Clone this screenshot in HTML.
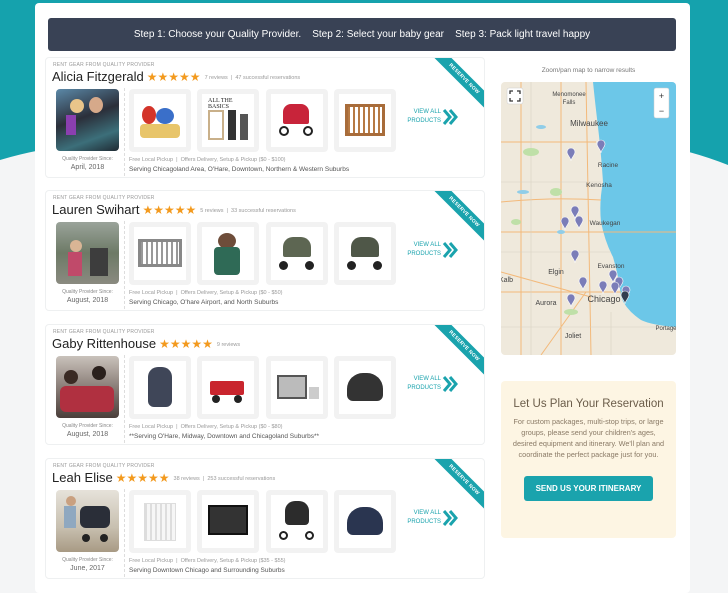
<!DOCTYPE html>
<html><head><meta charset="utf-8"><style>
*{box-sizing:border-box;margin:0;padding:0}
body{width:728px;height:586px;overflow:hidden;background:#f4f5f6;font-family:"Liberation Sans",sans-serif;position:relative}
.teal{position:absolute;left:0;top:0;width:728px;height:170px}
.wrap{position:absolute;left:35px;top:3px;width:655px;height:590px;background:#fff;border-radius:4px}
.hdr{position:absolute;left:13px;top:15px;width:628px;height:33px;background:#394255;border-radius:3px;color:#fff;font-size:10px;line-height:33px;text-align:center}
.card{position:absolute;left:10px;width:440px;height:121px;border:1px solid #eef0f1;border-radius:4px;overflow:hidden;background:#fff}
.lbl{position:absolute;left:7px;top:4px;font-size:5px;color:#999;letter-spacing:.2px}
.nm{position:absolute;left:6px;top:11px;font-size:13px;color:#222;white-space:nowrap}
.nm .st{color:#f39a1e;font-size:12px;letter-spacing:0px;margin-left:3px}
.nm .rv{font-size:5.5px;color:#999;margin-left:4px;vertical-align:2px}
.ph{position:absolute;left:10px;top:31px;width:63px;height:62px;border-radius:4px;overflow:hidden}
.qs{position:absolute;left:0;width:83px;top:98px;text-align:center;font-size:5px;color:#888}
.dt{position:absolute;left:0;width:83px;top:106px;text-align:center;font-size:7px;color:#666}
.sep{position:absolute;left:78px;top:30px;height:88px;border-left:1px dashed #ddd}
.tile{position:absolute;top:31px;width:62px;height:63px;background:#f2f2f2;border-radius:4px}
.tile .in{position:absolute;left:5px;top:5px;width:52px;height:53px;background:#fff;overflow:hidden}
.fl{position:absolute;left:83px;top:99px;font-size:5.5px;color:#999;white-space:nowrap}
.sv{position:absolute;left:83px;top:108px;font-size:6.5px;color:#555;white-space:nowrap}
.va{position:absolute;left:361px;top:50px;font-size:6px;color:#1aa3ad;line-height:9px;text-align:right;width:34px}
.chev{position:absolute;left:396px;top:50px}
.rib{position:absolute;left:368px;top:15px;width:100px;height:12px;background:#1aa3ad;transform:rotate(45deg);color:#fff;font-size:5px;font-weight:bold;text-align:center;line-height:12px;letter-spacing:.3px}
.side{position:absolute;left:466px;width:175px}
.plan{position:absolute;left:466px;top:378px;width:175px;height:157px;background:#fdf5e3;border-radius:4px;text-align:center;color:#7a6a55}
.plan h3{font-weight:normal;font-size:11.5px;margin-top:17px;color:#6b5d4a}
.plan p{font-size:7.3px;line-height:11px;margin:6px 8px 0;color:#8a7a66}
.btn{display:inline-block;margin-top:16px;background:#1aa3ad;color:#fff;font-size:8px;font-weight:bold;padding:8px 12px;border-radius:3px}
</style></head><body>
<svg class="teal" viewBox="0 0 728 170"><path d="M0 0H728V165Q690 150 655 145H80Q40 148 0 160Z" fill="#15a2ad"/></svg>
<div class="wrap">
<div class="hdr">Step 1: Choose your Quality Provider. &nbsp;&nbsp;&nbsp;Step 2: Select your baby gear &nbsp;&nbsp;&nbsp;Step 3: Pack light travel happy</div>

<!-- card 1 -->
<div class="card" style="top:54px">
<div class="lbl">RENT GEAR FROM QUALITY PROVIDER</div>
<div class="nm">Alicia Fitzgerald<span class="st">★★★★★</span><span class="rv">7 reviews &nbsp;| &nbsp;47 successful reservations</span></div>
<div class="ph" style="background:linear-gradient(160deg,#5b89a8,#2b2f3a 45%,#3c6f7a 75%,#1f2a33)"><div style="position:absolute;left:14px;top:10px;width:14px;height:14px;border-radius:50%;background:#e9c58a"></div><div style="position:absolute;left:33px;top:8px;width:14px;height:16px;border-radius:50%;background:#d6a98a"></div><div style="position:absolute;left:10px;top:26px;width:10px;height:20px;background:#8a3fb0"></div></div>
<div class="qs">Quality Provider Since:</div><div class="dt">April, 2018</div>
<div class="sep"></div>
<div class="tile" style="left:83px"><div class="in"><div style="position:absolute;left:8px;top:12px;width:14px;height:18px;border-radius:50%;background:#d3342a"></div><div style="position:absolute;left:22px;top:14px;width:18px;height:16px;border-radius:50%;background:#3a6fc9"></div><div style="position:absolute;left:6px;top:30px;width:40px;height:14px;background:#e8c56a;border-radius:4px"></div></div></div>
<div class="tile" style="left:151px"><div class="in"><div style="position:absolute;left:6px;top:4px;font-family:'Liberation Serif',serif;font-size:6px;color:#222">ALL THE BASICS</div><div style="position:absolute;left:6px;top:16px;width:16px;height:30px;border:2px solid #c9b08a"></div><div style="position:absolute;left:26px;top:16px;width:8px;height:30px;background:#333"></div><div style="position:absolute;left:38px;top:20px;width:8px;height:26px;background:#555"></div></div></div>
<div class="tile" style="left:220px"><div class="in"><div style="position:absolute;left:12px;top:10px;width:26px;height:20px;background:#c8243a;border-radius:8px 8px 2px 2px"></div><div style="position:absolute;left:8px;top:32px;width:10px;height:10px;border:2px solid #222;border-radius:50%"></div><div style="position:absolute;left:32px;top:32px;width:10px;height:10px;border:2px solid #222;border-radius:50%"></div></div></div>
<div class="tile" style="left:288px"><div class="in"><div style="position:absolute;left:6px;top:10px;width:40px;height:32px;border:3px solid #a86c3a;background:repeating-linear-gradient(90deg,#b77a44 0 2px,transparent 2px 5px)"></div></div></div>
<div class="va">VIEW ALL<br>PRODUCTS</div>
<svg class="chev" width="16" height="18" viewBox="0 0 16 18"><path d="M2 2l6 7-6 7M8 2l6 7-6 7" stroke="#1aa3ad" stroke-width="3" fill="none"/></svg>
<div class="rib">RESERVE NOW</div>
<div class="fl">Free Local Pickup &nbsp;| &nbsp;Offers Delivery, Setup &amp; Pickup ($0 - $100)</div>
<div class="sv">Serving Chicagoland Area, O'Hare, Downtown, Northern &amp; Western Suburbs</div>
</div>

<!-- card 2 -->
<div class="card" style="top:187px">
<div class="lbl">RENT GEAR FROM QUALITY PROVIDER</div>
<div class="nm">Lauren Swihart<span class="st">★★★★★</span><span class="rv">5 reviews &nbsp;| &nbsp;33 successful reservations</span></div>
<div class="ph" style="background:linear-gradient(180deg,#9aa39a,#6d7a66 50%,#8a8a80)"><div style="position:absolute;left:14px;top:18px;width:12px;height:12px;border-radius:50%;background:#d9b595"></div><div style="position:absolute;left:12px;top:30px;width:14px;height:24px;background:#c04a6a"></div><div style="position:absolute;left:34px;top:26px;width:18px;height:28px;background:#3d3d3d"></div></div>
<div class="qs">Quality Provider Since:</div><div class="dt">August, 2018</div>
<div class="sep"></div>
<div class="tile" style="left:83px"><div class="in"><div style="position:absolute;left:4px;top:12px;width:44px;height:28px;border:3px solid #888;background:repeating-linear-gradient(90deg,#999 0 2px,transparent 2px 5px)"></div></div></div>
<div class="tile" style="left:151px"><div class="in"><div style="position:absolute;left:16px;top:6px;width:18px;height:16px;border-radius:50%;background:#6e4d3a"></div><div style="position:absolute;left:12px;top:20px;width:26px;height:28px;background:#2f6a56;border-radius:4px"></div></div></div>
<div class="tile" style="left:220px"><div class="in"><div style="position:absolute;left:12px;top:10px;width:28px;height:20px;background:#5d6652;border-radius:10px 10px 2px 2px"></div><div style="position:absolute;left:8px;top:34px;width:9px;height:9px;background:#222;border-radius:50%"></div><div style="position:absolute;left:34px;top:34px;width:9px;height:9px;background:#222;border-radius:50%"></div></div></div>
<div class="tile" style="left:288px"><div class="in"><div style="position:absolute;left:12px;top:10px;width:28px;height:20px;background:#4f5748;border-radius:10px 10px 2px 2px"></div><div style="position:absolute;left:8px;top:34px;width:9px;height:9px;background:#222;border-radius:50%"></div><div style="position:absolute;left:34px;top:34px;width:9px;height:9px;background:#222;border-radius:50%"></div></div></div>
<div class="va">VIEW ALL<br>PRODUCTS</div>
<svg class="chev" width="16" height="18" viewBox="0 0 16 18"><path d="M2 2l6 7-6 7M8 2l6 7-6 7" stroke="#1aa3ad" stroke-width="3" fill="none"/></svg>
<div class="rib">RESERVE NOW</div>
<div class="fl">Free Local Pickup &nbsp;| &nbsp;Offers Delivery, Setup &amp; Pickup ($0 - $50)</div>
<div class="sv">Serving Chicago, O'hare Airport, and North Suburbs</div>
</div>

<!-- card 3 -->
<div class="card" style="top:321px">
<div class="lbl">RENT GEAR FROM QUALITY PROVIDER</div>
<div class="nm">Gaby Rittenhouse<span class="st">★★★★★</span><span class="rv">9 reviews</span></div>
<div class="ph" style="background:linear-gradient(180deg,#c9c2bb,#8a7e78 50%,#4a3e3a)"><div style="position:absolute;left:8px;top:14px;width:14px;height:14px;border-radius:50%;background:#3a2a24"></div><div style="position:absolute;left:36px;top:10px;width:14px;height:14px;border-radius:50%;background:#2a201c"></div><div style="position:absolute;left:4px;top:30px;width:54px;height:26px;background:#b03040;border-radius:6px"></div></div>
<div class="qs">Quality Provider Since:</div><div class="dt">August, 2018</div>
<div class="sep"></div>
<div class="tile" style="left:83px"><div class="in"><div style="position:absolute;left:14px;top:6px;width:24px;height:40px;background:#3f4658;border-radius:10px 10px 6px 6px"></div></div></div>
<div class="tile" style="left:151px"><div class="in"><div style="position:absolute;left:8px;top:20px;width:34px;height:14px;background:#c9252e;border-radius:2px"></div><div style="position:absolute;left:10px;top:34px;width:8px;height:8px;background:#222;border-radius:50%"></div><div style="position:absolute;left:32px;top:34px;width:8px;height:8px;background:#222;border-radius:50%"></div></div></div>
<div class="tile" style="left:220px"><div class="in"><div style="position:absolute;left:6px;top:14px;width:30px;height:24px;border:2px solid #555;background:#bbb"></div><div style="position:absolute;left:38px;top:26px;width:10px;height:12px;background:#ccc"></div></div></div>
<div class="tile" style="left:288px"><div class="in"><div style="position:absolute;left:8px;top:12px;width:36px;height:28px;background:#333;border-radius:16px 16px 6px 6px"></div></div></div>
<div class="va">VIEW ALL<br>PRODUCTS</div>
<svg class="chev" width="16" height="18" viewBox="0 0 16 18"><path d="M2 2l6 7-6 7M8 2l6 7-6 7" stroke="#1aa3ad" stroke-width="3" fill="none"/></svg>
<div class="rib">RESERVE NOW</div>
<div class="fl">Free Local Pickup &nbsp;| &nbsp;Offers Delivery, Setup &amp; Pickup ($0 - $80)</div>
<div class="sv">**Serving O'Hare, Midway, Downtown and Chicagoland Suburbs**</div>
</div>

<!-- card 4 -->
<div class="card" style="top:455px">
<div class="lbl">RENT GEAR FROM QUALITY PROVIDER</div>
<div class="nm">Leah Elise<span class="st">★★★★★</span><span class="rv">38 reviews &nbsp;| &nbsp;253 successful reservations</span></div>
<div class="ph" style="background:linear-gradient(180deg,#e6e2da,#c8c0b0 60%,#a89a84)"><div style="position:absolute;left:10px;top:6px;width:10px;height:10px;border-radius:50%;background:#c9a080"></div><div style="position:absolute;left:8px;top:16px;width:12px;height:22px;background:#8fa8c0"></div><div style="position:absolute;left:24px;top:16px;width:30px;height:22px;background:#2a2e38;border-radius:6px"></div><div style="position:absolute;left:26px;top:44px;width:8px;height:8px;background:#222;border-radius:50%"></div><div style="position:absolute;left:44px;top:44px;width:8px;height:8px;background:#222;border-radius:50%"></div></div>
<div class="qs">Quality Provider Since:</div><div class="dt">June, 2017</div>
<div class="sep"></div>
<div class="tile" style="left:83px"><div class="in"><div style="position:absolute;left:10px;top:8px;width:32px;height:38px;background:repeating-linear-gradient(90deg,#ddd 0 2px,#f6f6f6 2px 5px);border:1px solid #ddd"></div></div></div>
<div class="tile" style="left:151px"><div class="in"><div style="position:absolute;left:6px;top:10px;width:40px;height:30px;background:#333;border:2px solid #111"></div></div></div>
<div class="tile" style="left:220px"><div class="in"><div style="position:absolute;left:14px;top:6px;width:24px;height:24px;background:#2c2c2c;border-radius:10px 10px 4px 4px"></div><div style="position:absolute;left:8px;top:36px;width:9px;height:9px;border:2px solid #222;border-radius:50%"></div><div style="position:absolute;left:34px;top:36px;width:9px;height:9px;border:2px solid #222;border-radius:50%"></div></div></div>
<div class="tile" style="left:288px"><div class="in"><div style="position:absolute;left:8px;top:12px;width:36px;height:28px;background:#2a3550;border-radius:16px 16px 6px 6px"></div></div></div>
<div class="va">VIEW ALL<br>PRODUCTS</div>
<svg class="chev" width="16" height="18" viewBox="0 0 16 18"><path d="M2 2l6 7-6 7M8 2l6 7-6 7" stroke="#1aa3ad" stroke-width="3" fill="none"/></svg>
<div class="rib">RESERVE NOW</div>
<div class="fl">Free Local Pickup &nbsp;| &nbsp;Offers Delivery, Setup &amp; Pickup ($35 - $55)</div>
<div class="sv">Serving Downtown Chicago and Surrounding Suburbs</div>
</div>

<div class="side" style="top:64px;font-size:6.5px;color:#777;text-align:center">Zoom/pan map to narrow results</div>
<svg class="side" style="top:79px;border-radius:4px" width="175" height="273" viewBox="0 0 175 273">
<rect width="175" height="273" fill="#efe9dc"/>
<path d="M92 0H175V245Q150 243 140 238Q125 228 120 215Q118 195 112 175Q104 160 100 140Q98 120 102 100Q100 70 97 45Q94 20 92 0Z" fill="#6cc7e8"/>
<g stroke="#f3b97a" stroke-width="1" fill="none"><path d="M0 150H175M0 210H120M20 0V273M60 0V273M85 0L90 273M0 60H95M0 120Q50 115 100 118M40 273L85 210M0 190L90 215"/></g>
<g stroke="#d8d2c4" stroke-width="0.6" fill="none"><path d="M0 100H100M0 170H110M30 0V273M110 230V273M0 245H175"/></g>
<g fill="#bfe0a8"><ellipse cx="30" cy="70" rx="8" ry="4"/><ellipse cx="55" cy="110" rx="6" ry="4"/><ellipse cx="15" cy="140" rx="5" ry="3"/><ellipse cx="70" cy="230" rx="7" ry="3"/></g>
<g fill="#90cde8"><ellipse cx="22" cy="110" rx="6" ry="2"/><ellipse cx="40" cy="45" rx="5" ry="2"/><ellipse cx="60" cy="150" rx="4" ry="2"/></g>
<rect x="6" y="6" width="16" height="16" rx="2" fill="#fff" stroke="#ccc" stroke-width=".5"/><path d="M9 12V9H12M16 9H19V12M19 16V19H16M12 19H9V16" stroke="#333" stroke-width="1.3" fill="none"/>
<rect x="153" y="6" width="15" height="30" rx="2" fill="#fff" stroke="#ccc" stroke-width=".5"/><text x="160.5" y="17" font-size="9" text-anchor="middle" fill="#333" font-family="Liberation Sans">+</text><text x="160.5" y="32" font-size="9" text-anchor="middle" fill="#333" font-family="Liberation Sans">−</text>
<g font-family="Liberation Sans" fill="#444" text-anchor="middle"><text x="68" y="14" font-size="6">Menomonee</text><text x="68" y="22" font-size="6">Falls</text><text x="88" y="44" font-size="8">Milwaukee</text><text x="107" y="85" font-size="6.5">Racine</text><text x="98" y="105" font-size="6.5">Kenosha</text><text x="104" y="143" font-size="6.5">Waukegan</text><text x="110" y="186" font-size="6.5">Evanston</text><text x="55" y="192" font-size="7">Elgin</text><text x="5" y="200" font-size="7">Kalb</text><text x="103" y="220" font-size="9">Chicago</text><text x="45" y="223" font-size="7">Aurora</text><text x="72" y="256" font-size="7">Joliet</text><text x="165" y="248" font-size="6">Portage</text></g>
<g fill="#7b7db8" stroke="#fff" stroke-width=".6">
<path d="M96 62a4 4 0 1 1 8 0c0 3-4 6-4 9c0-3-4-6-4-9z"/><path d="M66 70a4 4 0 1 1 8 0c0 3-4 6-4 9c0-3-4-6-4-9z"/><path d="M70 128a4 4 0 1 1 8 0c0 3-4 6-4 9c0-3-4-6-4-9z"/><path d="M74 138a4 4 0 1 1 8 0c0 3-4 6-4 9c0-3-4-6-4-9z"/><path d="M60 139a4 4 0 1 1 8 0c0 3-4 6-4 9c0-3-4-6-4-9z"/><path d="M70 172a4 4 0 1 1 8 0c0 3-4 6-4 9c0-3-4-6-4-9z"/><path d="M108 192a4 4 0 1 1 8 0c0 3-4 6-4 9c0-3-4-6-4-9z"/><path d="M114 199a4 4 0 1 1 8 0c0 3-4 6-4 9c0-3-4-6-4-9z"/><path d="M110 204a4 4 0 1 1 8 0c0 3-4 6-4 9c0-3-4-6-4-9z"/><path d="M78 199a4 4 0 1 1 8 0c0 3-4 6-4 9c0-3-4-6-4-9z"/><path d="M98 203a4 4 0 1 1 8 0c0 3-4 6-4 9c0-3-4-6-4-9z"/><path d="M121 208a4 4 0 1 1 8 0c0 3-4 6-4 9c0-3-4-6-4-9z"/><path d="M66 216a4 4 0 1 1 8 0c0 3-4 6-4 9c0-3-4-6-4-9z"/>
<path d="M120 213a4 4 0 1 1 8 0c0 3-4 6-4 9c0-3-4-6-4-9z" fill="#333d50"/></g>
</svg>
<div class="plan"><h3>Let Us Plan Your Reservation</h3><p>For custom packages, multi-stop trips, or large groups, please send your children's ages, desired equipment and itinerary. We'll plan and coordinate the perfect package just for you.</p><div class="btn">SEND US YOUR ITINERARY</div></div>
</div>
</body></html>
